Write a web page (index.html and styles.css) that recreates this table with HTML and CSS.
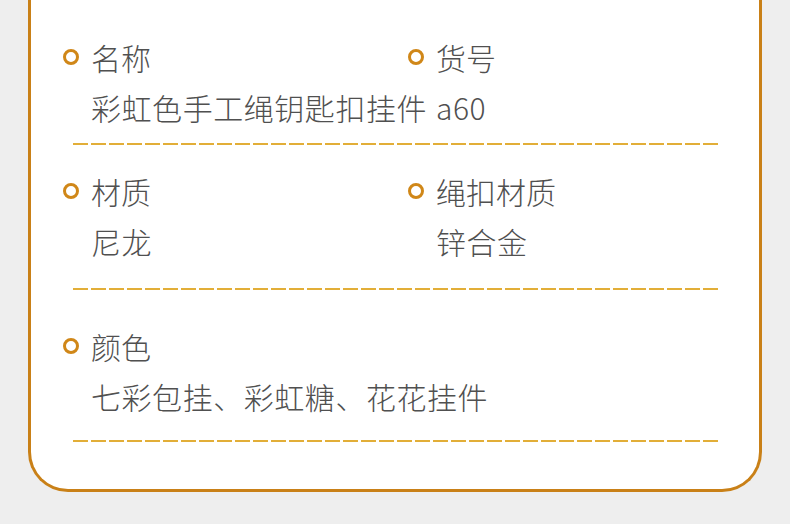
FILE: index.html
```html
<!DOCTYPE html>
<html lang="zh">
<head>
<meta charset="utf-8">
<link rel="stylesheet" href="styles.css">
</head>
<body>
<div class="card">
  <div class="row row-1">
    <div class="field">
      <div class="label"><span class="dot"></span>名称</div>
      <div class="value">彩虹色手工绳钥匙扣挂件</div>
    </div>
    <div class="field">
      <div class="label"><span class="dot"></span>货号</div>
      <div class="value">a60</div>
    </div>
  </div>
  <div class="dash dash-1"></div>
  <div class="row row-2">
    <div class="field">
      <div class="label"><span class="dot"></span>材质</div>
      <div class="value">尼龙</div>
    </div>
    <div class="field">
      <div class="label"><span class="dot"></span>绳扣材质</div>
      <div class="value">锌合金</div>
    </div>
  </div>
  <div class="dash dash-2"></div>
  <div class="row row-3">
    <div class="field">
      <div class="label"><span class="dot"></span>颜色</div>
      <div class="value">七彩包挂、彩虹糖、花花挂件</div>
    </div>
  </div>
  <div class="dash dash-3"></div>
</div>
</body>
</html>
```

FILE: styles.css
```css
html, body {
  margin: 0;
  padding: 0;
  background: #eeeeee;
}
body {
  width: 790px;
  height: 524px;
  overflow: hidden;
  font-family: "Noto Sans CJK SC", "Noto Sans", sans-serif;
  font-weight: 300;
  color: #505050;
}
.card {
  margin-left: 28px;
  width: 696px;
  height: 489px;
  background: #ffffff;
  border: 3px solid #c98017;
  border-top: none;
  border-radius: 0 0 40px 40px;
  padding-left: 32px;
  box-sizing: content-box;
  display: flex;
  flex-direction: column;
}
.row {
  display: grid;
  grid-template-columns: 345px 1fr;
}
.field {
  display: flex;
  flex-direction: column;
}
.label {
  display: flex;
  align-items: center;
  font-size: 30px;
  line-height: 36px;
  height: 36px;
  white-space: nowrap;
}
.dot {
  width: 10px;
  height: 10px;
  border: 3px solid #d08718;
  border-radius: 50%;
  margin-right: 12px;
  flex: none;
}
.value {
  font-size: 30px;
  line-height: 36px;
  height: 36px;
  margin-top: 14px;
  padding-left: 28px;
  letter-spacing: 0.55px;
  white-space: nowrap;
}
.row-1 { padding-top: 39px; }
.row-2 { padding-top: 28px; }
.row-3 { padding-top: 38px; }
.dash {
  margin-left: 10px;
  width: 648px;
  height: 2px;
  background-image: linear-gradient(to right, #e2ae38 15px, transparent 15px);
  background-size: 18px 2px;
  background-repeat: repeat-x;
}
.dash-1 { margin-top: 18px; }
.dash-2 { margin-top: 29px; }
.dash-3 { margin-top: 26px; }
```
